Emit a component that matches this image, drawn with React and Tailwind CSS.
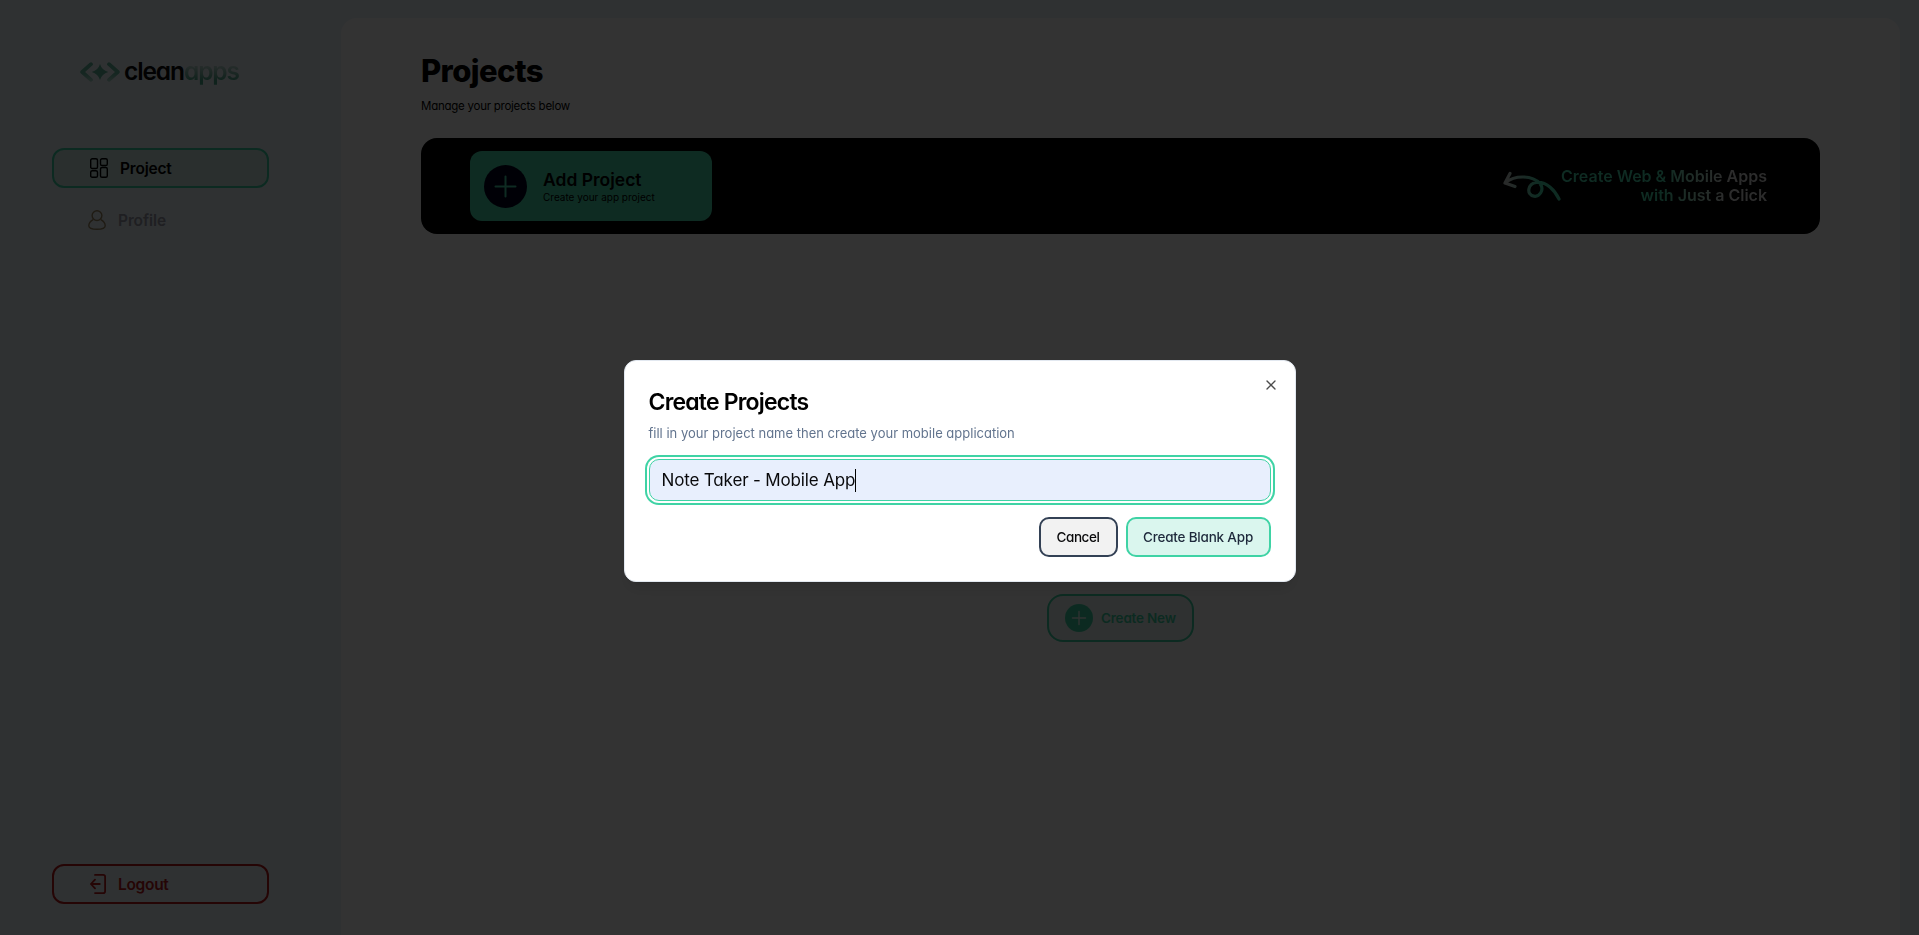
import { X } from "lucide-react";

function Logo() {
  return (
    <div className="flex h-8 items-center">
      <svg className="h-5 w-10" viewBox="0 0 40 20" fill="none">
        <defs>
          <linearGradient id="logoMark" x1="0" y1="0" x2="0" y2="20" gradientUnits="userSpaceOnUse">
            <stop stopColor="#5fb59b" />
            <stop offset="0.6" stopColor="#6dbfa6" />
            <stop offset="1" stopColor="#b4dcd2" />
          </linearGradient>
        </defs>
        <path d="M11 2.2 L2.2 10 L11 17.8 M29 2.2 L37.8 10 L29 17.8" stroke="url(#logoMark)" strokeWidth="3.8" strokeLinecap="round" strokeLinejoin="round" />
        <path d="M20 2 Q21.8 8.2 28.3 10 Q21.8 11.8 20 18 Q18.2 11.8 11.7 10 Q18.2 8.2 20 2Z" fill="#5fb59b" />
      </svg>
      <div className="-mt-0.5 ml-1 flex text-[24.5px] leading-8 font-semibold tracking-[-1.1px]">
        <span className="text-[#0a0a0a]">clean</span>
        <span className="bg-linear-to-b from-[#b9d9d1] from-35% to-[#4ba88c] to-80% bg-clip-text pr-1 text-transparent">apps</span>
      </div>
    </div>
  );
}

function GridIcon() {
  return (
    <svg className="h-5 w-[18px]" viewBox="0 0 18 20" fill="none" stroke="#000" strokeWidth="1.4">
      <rect x="0.7" y="0.7" width="6.8" height="9.8" rx="1.6" />
      <rect x="10.5" y="0.7" width="6.8" height="6.8" rx="1.6" />
      <rect x="0.7" y="12.7" width="6.8" height="6.6" rx="1.6" />
      <rect x="10.5" y="9.5" width="6.8" height="9.8" rx="1.6" />
    </svg>
  );
}

function ProfileIcon() {
  return (
    <svg className="h-5 w-[18px]" viewBox="0 0 18 20" fill="none" stroke="#9a8660" strokeWidth="1.4">
      <circle cx="9" cy="5.6" r="4.9" />
      <path d="M5.2 9.6 C2.5 11 0.8 13.4 0.8 15.8 C0.8 18.4 3.6 19.3 9 19.3 C14.4 19.3 17.2 18.4 17.2 15.8 C17.2 13.4 15.5 11 12.8 9.6" />
    </svg>
  );
}

function LogoutIcon() {
  return (
    <svg className="h-5 w-4" viewBox="0 0 16 20" fill="none" stroke="#b91c1c" strokeWidth="1.8" strokeLinecap="round" strokeLinejoin="round">
      <path d="M5 0.9 H13.2 A1.9 1.9 0 0 1 15.1 2.8 V17.2 A1.9 1.9 0 0 1 13.2 19.1 H5" />
      <path d="M9.8 10 H1 M5 5.6 L0.9 10 L5 14.4" />
    </svg>
  );
}

function Sidebar() {
  return (
    <aside className="flex w-[341px] shrink-0 flex-col pt-14 pr-[72px] pb-[31px] pl-[52px]">
      <div className="pl-7">
        <Logo />
      </div>
      <nav className="mt-[60px] flex flex-col gap-3">
        <a className="flex h-10 items-center gap-3 rounded-xl border-2 border-[#3fd3a5] bg-[#cfeae6] pl-9 text-black">
          <GridIcon />
          <span className="pt-0.5 text-[15.5px] font-semibold tracking-[-0.2px]">Project</span>
        </a>
        <a className="flex h-10 items-center gap-3 pl-9 text-[#999da8]">
          <ProfileIcon />
          <span className="pt-0.5 text-[15.5px] font-semibold tracking-[-0.1px]">Profile</span>
        </a>
      </nav>
      <a className="mt-auto flex h-10 items-center gap-3 rounded-xl border-2 border-[#b91c1c] pl-9 text-[#b91c1c]">
        <LogoutIcon />
        <span className="pt-0.5 text-[15.5px] font-semibold tracking-[-0.3px]">Logout</span>
      </a>
    </aside>
  );
}

function Banner() {
  return (
    <section className="mt-6 flex h-24 items-center justify-between rounded-2xl bg-black pr-[53px] pl-[49px]">
      <button className="flex h-[70px] w-[242px] items-center gap-4 rounded-xl bg-[#48d5a9] pl-3.5 text-left">
        <svg className="size-[43px]" viewBox="0 0 43 43" fill="none">
          <circle cx="21.5" cy="21.5" r="21.5" fill="#020220" />
          <path d="M21.5 11.5 V31.5 M11.5 21.5 H31.5" stroke="#48d5a9" strokeWidth="2" strokeLinecap="round" />
        </svg>
        <span className="flex flex-col pt-0.5 text-black [font-feature-settings:normal]">
          <span className="text-[17.5px] leading-5 font-semibold">Add Project</span>
          <span className="text-[10px] leading-3.5">Create your app project</span>
        </span>
      </button>
      <div className="flex items-center">
        <svg className="h-[30px] w-[58px]" viewBox="0 0 58 30" fill="none">
          <defs>
            <linearGradient id="arrow" x1="0" y1="0" x2="36" y2="0" gradientUnits="userSpaceOnUse">
              <stop offset="0.15" stopColor="#c5d0cc" />
              <stop offset="1" stopColor="#48d5a9" />
            </linearGradient>
          </defs>
          <path d="M7 2.5 L2 12 L12 15.5 M2.5 11.5 C12 4 29 4 37 12.5 C42 19.5 36 26 31 25.2 C23 24 24.5 12.5 33.5 11.5 C44 10.5 52 19.5 56 28" stroke="url(#arrow)" strokeWidth="3.2" strokeLinecap="round" strokeLinejoin="round" />
        </svg>
        <p className="bg-linear-to-r from-[#48d5a9] from-50% to-[#dcdcdc] to-80% bg-clip-text text-right text-[16px] leading-[19px] font-semibold text-transparent [font-feature-settings:normal]">
          Create Web &amp; Mobile Apps
          <br />
          with Just a Click
        </p>
      </div>
    </section>
  );
}

function CreateDialog() {
  return (
    <div className="fixed inset-0 flex items-center justify-center bg-black/80 pt-[7px]">
      <div className="relative flex h-[222px] w-[672px] flex-col rounded-xl border border-slate-200 bg-white px-6 pt-6 shadow-lg">
        <button className="absolute top-4 right-4 text-black opacity-70">
          <X className="size-4" />
        </button>
        <h2 className="pt-px text-[23px] leading-8 font-semibold tracking-[-0.8px] text-black">Create Projects</h2>
        <p className="mt-[5px] text-[13px] leading-5 text-slate-500">fill in your project name then create your mobile application</p>
        <div className="mt-4 flex h-[42px] shrink-0 items-center rounded-[10px] border border-[#3fd3a5] bg-[#e8effd] px-3 text-[17px] tracking-[-0.15px] text-[#09090b] ring-2 ring-[#3fd3a5] ring-offset-2">
          <span className="pt-0.5">Note Taker - Mobile App</span>
          <span className="h-[23px] w-px bg-black" />
        </div>
        <div className="mt-4 flex justify-end gap-2 text-[13.5px] font-medium">
          <button className="h-10 w-[79px] rounded-[10px] border-2 border-[#334155] bg-[#f2f2f2] tracking-[-0.4px] text-[#09090b]">Cancel</button>
          <button className="h-10 w-[145px] rounded-[10px] border-2 border-[#3fd3a5] bg-[#daf6ee] tracking-[-0.2px] text-[#1e293b]">Create Blank App</button>
        </div>
      </div>
    </div>
  );
}

export default function App() {
  return (
    <div className="flex h-[935px] overflow-hidden bg-[#ecf4fb] font-['Inter',sans-serif] text-black [font-feature-settings:'cv11']">
      <Sidebar />
      <main className="mt-[18px] mr-[19px] flex min-w-0 flex-1 flex-col rounded-t-2xl bg-white px-20 pt-8">
        <h1 className="pt-px text-[31px] leading-10 font-extrabold tracking-[-0.6px]">Projects</h1>
        <p className="mt-1.5 -mb-px text-[11.5px] leading-[18px] tracking-[-0.25px]">Manage your projects below</p>
        <Banner />
        <div className="mt-[360px] flex justify-center">
          <button className="flex h-12 w-[147px] items-center gap-2 rounded-2xl border-2 border-[#3fd3a5] bg-[#e8f6f2] pl-4 text-[#3fd3a5]">
            <svg className="size-7" viewBox="0 0 28 28" fill="none">
              <circle cx="14" cy="14" r="14" fill="#3fd3a5" />
              <path d="M14 7.5 V20.5 M7.5 14 H20.5" stroke="#e8f6f2" strokeWidth="1.4" strokeLinecap="round" />
            </svg>
            <span className="text-[13.5px] font-semibold whitespace-nowrap tracking-[-0.2px]">Create New</span>
          </button>
        </div>
      </main>
      <CreateDialog />
    </div>
  );
}
